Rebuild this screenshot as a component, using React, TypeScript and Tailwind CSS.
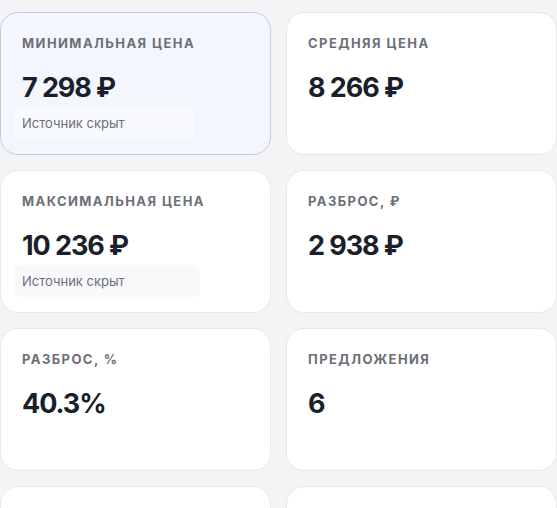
import React from "react";

// Карточки статистики цен — сетка 2 колонки
type Stat = {
  label: string;
  value: string;
  note?: string;
  active?: boolean;
};

const stats: Stat[] = [
  { label: "Минимальная цена", value: "7 298 ₽", note: "Источник скрыт", active: true },
  { label: "Средняя цена", value: "8 266 ₽" },
  { label: "Максимальная цена", value: "10 236 ₽", note: "Источник скрыт" },
  { label: "Разброс, ₽", value: "2 938 ₽" },
  { label: "Разброс, %", value: "40.3%" },
  { label: "Предложения", value: "6" },
  { label: "", value: "" },
  { label: "", value: "" },
];

function StatCard({ s }: { s: Stat }) {
  return (
    <div
      className={
        s.active
          ? "h-[143px] rounded-[18px] border border-[#bccde6] bg-[#f3f7fd] px-[21px] pt-[21px]"
          : "h-[143px] rounded-[18px] border border-[#e7e8ec] bg-white px-[21px] pt-[21px]"
      }
    >
      <div className="text-[13px] font-bold uppercase leading-[18px] tracking-[0.11em] text-[#6b6f78]">
        {s.label}
      </div>
      <div className="mt-[20px] text-[27px] font-bold leading-[32px] tracking-[-0.04em] text-[#1a1f2b]">
        {s.value}
      </div>
      {s.note && (
        <div
          className={
            s.active
              ? "-ml-[8px] mt-[3px] w-[180px] rounded-md bg-[#f8fafd] px-[8px] py-[7px] text-[13px] leading-[18px] text-[#6b6f78]"
              : "-ml-[8px] mt-[3px] w-[186px] rounded-md bg-[#f9f9fb] px-[8px] py-[7px] text-[13px] leading-[18px] text-[#6b6f78]"
          }
        >
          {s.note}
        </div>
      )}
    </div>
  );
}

export default function App() {
  return (
    <div
      className="h-[508px] w-[557px] overflow-hidden bg-[#f4f4f6]"
      style={{ fontFamily: "Inter, 'Noto Sans', sans-serif" }}
    >
      <div className="grid grid-cols-2 gap-x-[15px] gap-y-[15px] pt-[12px]">
        {stats.map((s, i) => (
          <StatCard key={i} s={s} />
        ))}
      </div>
    </div>
  );
}
